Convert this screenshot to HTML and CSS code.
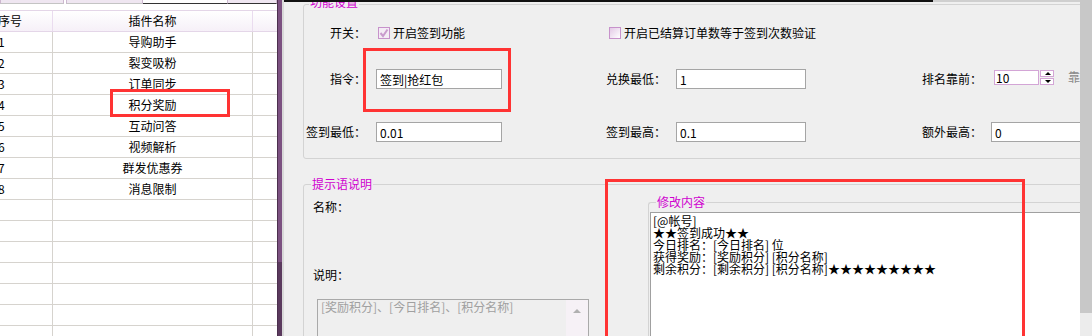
FILE: index.html
```html
<!DOCTYPE html>
<html lang="zh-CN">
<head>
  <meta charset="UTF-8" />
  <title>插件设置 – 积分奖励</title>
  <link rel="stylesheet" href="styles.css">
</head>
<body>
<div class="app">
  <!-- Plugin list -->
  <aside class="plugins">
    <div class="tabs">
      <span class="tab t1"></span><span class="tab t2"></span><span class="tab on"></span><span class="tab t4"></span>
    </div>
    <div class="grid">
      <div class="row head"><div class="c1">序号</div><div class="c2">插件名称</div><div class="c3"></div></div>
      <div class="row"><div class="c1">1</div><div class="c2">导购助手</div><div class="c3"></div></div>
      <div class="row"><div class="c1">2</div><div class="c2">裂变吸粉</div><div class="c3"></div></div>
      <div class="row"><div class="c1">3</div><div class="c2">订单同步</div><div class="c3"></div></div>
      <div class="row"><div class="c1">4</div><div class="c2">积分奖励</div><div class="c3"></div></div>
      <div class="row"><div class="c1">5</div><div class="c2">互动问答</div><div class="c3"></div></div>
      <div class="row"><div class="c1">6</div><div class="c2">视频解析</div><div class="c3"></div></div>
      <div class="row"><div class="c1">7</div><div class="c2">群发优惠券</div><div class="c3"></div></div>
      <div class="row"><div class="c1">8</div><div class="c2">消息限制</div><div class="c3"></div></div>
      <div class="row"><div class="c1"></div><div class="c2"></div><div class="c3"></div></div>
      <div class="row"><div class="c1"></div><div class="c2"></div><div class="c3"></div></div>
      <div class="row"><div class="c1"></div><div class="c2"></div><div class="c3"></div></div>
      <div class="row"><div class="c1"></div><div class="c2"></div><div class="c3"></div></div>
      <div class="row"><div class="c1"></div><div class="c2"></div><div class="c3"></div></div>
      <div class="row"><div class="c1"></div><div class="c2"></div><div class="c3"></div></div>
      <div class="row"><div class="c1"></div><div class="c2"></div><div class="c3"></div></div>
    </div>
    <div class="mark mark-list"></div>
  </aside>

  <div class="splitter"></div>

  <!-- Settings -->
  <main class="settings">
    <div class="scroller">
      <div class="topline"></div>

      <section class="group g-func">
        <span class="legend">功能设置</span>
        <div class="frow r1">
          <span class="lbl">开关：</span>
          <label class="check c-on"><span class="box"><svg width="10" height="10" viewBox="0 0 10 10"><path d="M1.5 5 L4 8 L8.5 1.5" fill="none" stroke="#c99ccd" stroke-width="2"/></svg></span>开启签到功能</label>
          <label class="check c-wide"><span class="box"></span>开启已结算订单数等于签到次数验证</label>
        </div>
        <div class="frow r2">
          <span class="lbl">指令：</span>
          <input class="field w126" value="签到|抢红包">
          <span class="lbl">兑换最低：</span>
          <input class="field w130" value="1">
          <span class="lbl l5">排名靠前：</span>
          <div class="spin">
            <input class="spin-input" value="10">
            <span class="spin-btns"><span class="up"></span><span class="down"></span></span>
            <span class="dim">靠</span>
          </div>
        </div>
        <div class="frow r3">
          <span class="lbl">签到最低：</span>
          <input class="field w126" value="0.01">
          <span class="lbl">签到最高：</span>
          <input class="field w130" value="0.1">
          <span class="lbl l5">额外最高：</span>
          <input class="field w100" value="0">
        </div>
      </section>

      <section class="group g-tips">
        <span class="legend">提示语说明</span>
        <div class="tips-left">
          <div class="tip-lbl">名称：</div>
          <div class="tip-lbl t2">说明：</div>
          <div class="memo">
            <div class="memo-text">[奖励积分]、[今日排名]、[积分名称]</div>
            <div class="memo-bar"><span class="arrow"></span></div>
          </div>
        </div>
        <div class="group g-edit">
          <span class="legend">修改内容</span>
          <div class="editor">[@帐号]
★★签到成功★★
今日排名：[今日排名] 位
获得奖励：[奖励积分] [积分名称]
剩余积分：[剩余积分] [积分名称]★★★★★★★★★</div>
        </div>
      </section>
    </div>
    <div class="vscroll"></div>
    <div class="mark mark-cmd"></div>
    <div class="mark mark-edit"></div>
  </main>
</div>
</body>
</html>
```

FILE: styles.css
```css
:root {
  --panel: #efefef;
  --line: #d6d3ce;
  --lav: #e4d6e8;
  --pink: #d3a5d6;
  --legend: #d000d0;
  --red: #f33;
}
* { box-sizing: border-box; margin: 0; padding: 0; }
html, body { height: 336px; overflow: hidden; }
body {
  font: 12px/14px "Noto Sans CJK SC", "Noto Sans", sans-serif;
  color: #000;
  background: var(--panel);
}
.app { display: flex; height: 336px; overflow: hidden; }

/* Plugin list */
.plugins { position: relative; flex: none; width: 277px; background: #fff; overflow: hidden; }
.tabs { display: flex; height: 4px; }
.tab { height: 4px; background: #efe6f1; border: 1px solid #cdb8d0; border-top: 0; border-bottom-color: #c4c4c4; }
.tab.t1 { width: 64px; }
.tab.t2 { width: 77px; margin-left: 2px; }
.tab.on { width: 84px; background: #fff; border: 0; border-bottom: 1px solid #333; }
.tab.t4 { flex: 1; border-bottom-color: #333; }
.grid { width: 320px; margin: 6px 0 0 -4px; }
.row { display: grid; grid-template-columns: 57px 200px 1fr; height: 21px; border-bottom: 1px solid var(--line); }
.row > div { display: flex; align-items: center; border-right: 1px solid var(--line); }
.c1 { padding-left: 2px; }
.c2 { justify-content: center; }
.row.head { height: 22px; border-top: 1px solid var(--lav); border-bottom-color: var(--lav); background: linear-gradient(#fff, #f6f0f8); }
.row.head > div { border-right-color: #eadcef; }

.splitter {
  flex: none;
  width: 5px;
  background: linear-gradient(#7c5181 0 78%, #5b3a5e 78%);
  box-shadow: inset 1px 0 #4b2f4e;
}

/* Settings */
.settings { position: relative; flex: 1; display: flex; height: 336px; overflow: hidden; border-left: 2px solid #d9d9d9; background: var(--panel); }
.scroller { flex: 1; overflow: hidden; }
.vscroll { flex: none; width: 12px; background: linear-gradient(#c8c8c8 0 313px, #ececec 313px); }
.topline { position: relative; z-index: 1; height: 2px; background: linear-gradient(to right, #111 649px, #cfcfcf 649px); }

.group { position: relative; border: 1px solid #d3d3d3; border-radius: 3px; }
.legend { position: absolute; left: 7px; top: -8px; padding: 0 1px; background: var(--panel); color: var(--legend); white-space: nowrap; }
.g-func { margin: 2px -12px 0 19px; padding-bottom: 16px; }
.g-func > .legend { left: 5px; top: -10px; }

.frow { display: grid; grid-template-columns: 72px 126px 174px 130px 185px 1fr; height: 20px; align-items: center; }
.frow.r1 { margin-top: 18px; }
.frow.r2 { margin-top: 26px; }
.frow.r3 { margin-top: 33px; }
.lbl { text-align: right; padding-right: 10px; white-space: nowrap; }
.lbl.l5 { padding-right: 9px; }

.check { display: flex; align-items: center; gap: 3px; white-space: nowrap; }
.check.c-on { margin-left: 2px; }
.check.c-wide { grid-column: 3 / 7; padding-left: 107px; }
.box {
  display: flex; align-items: center; justify-content: center;
  width: 12px; height: 12px;
  border: 1px solid #c792cb;
  background: linear-gradient(135deg, #e3c9e6, #fff);
}
.c-on .box { background: #f4ecf5; }

.field {
  height: 20px;
  border: 1px solid #a5a5a5;
  background: #fff;
  padding: 0 3px;
  font: inherit;
  color: #000;
  outline: none;
}
.w126 { width: 126px; }
.w130 { width: 130px; }
.w100 { width: 100px; }

.spin { display: flex; align-items: center; margin: -4px 0 0 3px; white-space: nowrap; }
.spin-input { width: 45px; height: 15px; border: 1px solid var(--pink); padding: 0 1px; font: inherit; outline: none; }
.spin-btns { display: flex; flex-direction: column; gap: 1px; margin-left: 1px; }
.spin-btns span { position: relative; width: 14px; height: 7px; border: 1px solid var(--pink); background: #fff; }
.spin-btns span::after {
  content: ""; position: absolute; left: 4px; top: 1px;
  border-left: 3px solid transparent; border-right: 3px solid transparent;
}
.spin-btns .up::after { border-bottom: 3px solid #000; }
.spin-btns .down::after { border-top: 3px solid #000; }
.dim { margin-left: 14px; color: #8a8a8a; }

.g-tips { display: flex; height: 200px; margin: 25px -12px 0 19px; }
.tips-left { flex: none; width: 285px; padding: 15px 0 0 9px; }
.tip-lbl.t2 { margin-top: 54px; }
.memo { display: flex; width: 272px; height: 60px; margin: 17px 0 0 4px; border: 1px solid #a9a9a9; background: var(--panel); }
.memo-text { flex: 1; padding: 0 3px; color: #a0a0a0; white-space: nowrap; }
.memo-bar { position: relative; width: 22px; background: #f6f1f6; }
.arrow {
  position: absolute; left: 7px; top: 9px;
  border-left: 4px solid transparent; border-right: 4px solid transparent;
  border-bottom: 4px solid #b0b0b0;
}
.g-edit { flex: 1; margin: 17px 0 0 59px; border-right: 0; }
.editor {
  height: 200px;
  margin: 9px 0 0 1px;
  padding: 2px 2px;
  border: 1px solid #a0a0a0;
  border-right: 0;
  background: #fff;
  line-height: 12px;
  white-space: pre;
}

/* Highlight marks */
.mark { position: absolute; border: 3px solid var(--red); pointer-events: none; }
.mark-list { left: 110px; top: 89px; width: 120px; height: 28px; }
.mark-cmd { left: 79px; top: 48px; width: 148px; height: 64px; }
.mark-edit { left: 321px; top: 179px; width: 420px; height: 200px; }
```
